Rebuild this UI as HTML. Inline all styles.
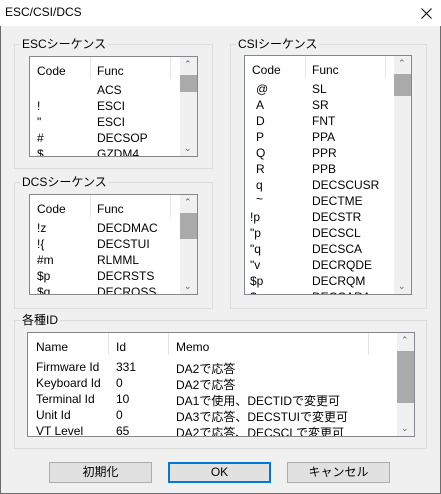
<!DOCTYPE html>
<html><head><meta charset="utf-8"><style>
*{margin:0;padding:0;box-sizing:border-box}
body{width:441px;height:494px;background:#f0f0f0;font-family:"Liberation Sans","Noto Sans CJK JP",sans-serif;font-size:12px;color:#000;position:relative;overflow:hidden}
.a{position:absolute;white-space:nowrap}
.win{position:absolute;left:0;top:0;width:441px;height:494px;border:1px solid #6d6d6d}
.title{position:absolute;left:0;top:0;width:441px;height:26px;background:#fff}
.grp{position:absolute;border:1px solid #dcdcdc}
.lbl{position:absolute;background:#f0f0f0;padding:0 2px;line-height:14px}
.lst{position:absolute;background:#fff;border:1px solid #828790;overflow:hidden}
.sb{position:absolute;top:0;right:0;width:17px;bottom:0;background:#f0f0f0}
.th{position:absolute;background:#aaa;width:17px}
.hd{position:absolute;top:0;width:1px;height:22px;background:#e5e5e5}
.btn{position:absolute;top:462px;width:103px;height:21px;background:#e1e1e1;border:1px solid #adadad;text-align:center;line-height:19px}
.arr{position:absolute;left:4px;font-size:9px;color:#606060}
</style></head><body>
<div class="win"></div>
<div class="title"></div>
<div class="a" style="left:5px;top:5px">ESC/CSI/DCS</div>
<svg class="a" style="left:421px;top:8px" width="11" height="11"><path d="M0.5 0.5L10.5 10.5M10.5 0.5L0.5 10.5" stroke="#000" stroke-width="1"/></svg>

<!-- ESC -->
<div class="grp" style="left:14px;top:44px;width:199px;height:125px"></div>
<div class="lbl" style="left:20px;top:37px">ESCシーケンス</div>
<div class="lst" style="left:29px;top:56px;width:169px;height:101px">
 <div class="hd" style="left:60px"></div><div class="hd" style="left:140px"></div>
 <div class="a" style="left:7px;top:7px">Code</div><div class="a" style="left:67px;top:7px">Func</div>
 <div class="a" style="left:67px;top:26px">ACS</div>
 <div class="a" style="left:7px;top:42px">!</div><div class="a" style="left:67px;top:42px">ESCI</div>
 <div class="a" style="left:7px;top:58px">"</div><div class="a" style="left:67px;top:58px">ESCI</div>
 <div class="a" style="left:7px;top:74px">#</div><div class="a" style="left:67px;top:74px">DECSOP</div>
 <div class="a" style="left:7px;top:90px">$</div><div class="a" style="left:67px;top:90px">GZDM4</div>
 <div class="sb"><div class="th" style="top:18px;height:17px"></div><div class="arr" style="top:2px">⌃</div><div class="arr" style="bottom:2px">⌄</div></div>
</div>

<!-- DCS -->
<div class="grp" style="left:14px;top:182px;width:199px;height:127px"></div>
<div class="lbl" style="left:20px;top:175px">DCSシーケンス</div>
<div class="lst" style="left:29px;top:194px;width:169px;height:101px">
 <div class="hd" style="left:60px"></div><div class="hd" style="left:140px"></div>
 <div class="a" style="left:7px;top:7px">Code</div><div class="a" style="left:67px;top:7px">Func</div>
 <div class="a" style="left:7px;top:26px">!z</div><div class="a" style="left:67px;top:26px">DECDMAC</div>
 <div class="a" style="left:7px;top:42px">!{</div><div class="a" style="left:67px;top:42px">DECSTUI</div>
 <div class="a" style="left:7px;top:58px">#m</div><div class="a" style="left:67px;top:58px">RLMML</div>
 <div class="a" style="left:7px;top:74px">$p</div><div class="a" style="left:67px;top:74px">DECRSTS</div>
 <div class="a" style="left:7px;top:90px">$q</div><div class="a" style="left:67px;top:90px">DECRQSS</div>
 <div class="sb"><div class="th" style="top:18px;height:26px"></div><div class="arr" style="top:2px">⌃</div><div class="arr" style="bottom:2px">⌄</div></div>
</div>

<!-- CSI -->
<div class="grp" style="left:230px;top:44px;width:197px;height:265px"></div>
<div class="lbl" style="left:236px;top:37px">CSIシーケンス</div>
<div class="lst" style="left:244px;top:55px;width:168px;height:240px">
 <div class="hd" style="left:60px"></div><div class="hd" style="left:140px"></div>
 <div class="a" style="left:7px;top:7px">Code</div><div class="a" style="left:67px;top:7px">Func</div>
 <div class="a" style="left:11px;top:26px">@</div><div class="a" style="left:67px;top:26px">SL</div>
 <div class="a" style="left:11px;top:42px">A</div><div class="a" style="left:67px;top:42px">SR</div>
 <div class="a" style="left:11px;top:58px">D</div><div class="a" style="left:67px;top:58px">FNT</div>
 <div class="a" style="left:11px;top:74px">P</div><div class="a" style="left:67px;top:74px">PPA</div>
 <div class="a" style="left:11px;top:90px">Q</div><div class="a" style="left:67px;top:90px">PPR</div>
 <div class="a" style="left:11px;top:106px">R</div><div class="a" style="left:67px;top:106px">PPB</div>
 <div class="a" style="left:11px;top:122px">q</div><div class="a" style="left:67px;top:122px">DECSCUSR</div>
 <div class="a" style="left:11px;top:136px">~</div><div class="a" style="left:67px;top:138px">DECTME</div>
 <div class="a" style="left:5px;top:154px">!p</div><div class="a" style="left:67px;top:154px">DECSTR</div>
 <div class="a" style="left:5px;top:170px">"p</div><div class="a" style="left:67px;top:170px">DECSCL</div>
 <div class="a" style="left:5px;top:186px">"q</div><div class="a" style="left:67px;top:186px">DECSCA</div>
 <div class="a" style="left:5px;top:202px">"v</div><div class="a" style="left:67px;top:202px">DECRQDE</div>
 <div class="a" style="left:5px;top:218px">$p</div><div class="a" style="left:67px;top:218px">DECRQM</div>
 <div class="a" style="left:5px;top:234px">$r</div><div class="a" style="left:67px;top:234px">DECCARA</div>
 <div class="sb"><div class="th" style="top:18px;height:22px"></div><div class="arr" style="top:2px">⌃</div><div class="arr" style="bottom:2px">⌄</div></div>
</div>

<!-- ID -->
<div class="grp" style="left:14px;top:320px;width:413px;height:129px"></div>
<div class="lbl" style="left:20px;top:313px">各種ID</div>
<div class="lst" style="left:27px;top:332px;width:388px;height:105px">
 <div class="hd" style="left:80px"></div><div class="hd" style="left:140px"></div><div class="hd" style="left:340px"></div>
 <div class="a" style="left:8px;top:7px">Name</div><div class="a" style="left:88px;top:7px">Id</div><div class="a" style="left:148px;top:7px">Memo</div>
 <div class="a" style="left:8px;top:27px">Firmware Id</div><div class="a" style="left:88px;top:27px">331</div><div class="a" style="left:148px;top:27px">DA2で応答</div>
 <div class="a" style="left:8px;top:43px">Keyboard Id</div><div class="a" style="left:88px;top:43px">0</div><div class="a" style="left:148px;top:43px">DA2で応答</div>
 <div class="a" style="left:8px;top:59px">Terminal Id</div><div class="a" style="left:88px;top:59px">10</div><div class="a" style="left:148px;top:59px">DA1で使用、DECTIDで変更可</div>
 <div class="a" style="left:8px;top:75px">Unit Id</div><div class="a" style="left:88px;top:75px">0</div><div class="a" style="left:148px;top:75px">DA3で応答、DECSTUIで変更可</div>
 <div class="a" style="left:8px;top:91px">VT Level</div><div class="a" style="left:88px;top:91px">65</div><div class="a" style="left:148px;top:91px">DA2で応答、DECSCLで変更可</div>
 <div class="sb"><div class="th" style="top:18px;height:52px"></div><div class="arr" style="top:2px">⌃</div><div class="arr" style="bottom:2px">⌄</div></div>
</div>

<div class="btn" style="left:49px">初期化</div>
<div class="btn" style="left:168px;border:2px solid #0078d7;line-height:17px">OK</div>
<div class="btn" style="left:287px">キャンセル</div>
</body></html>
